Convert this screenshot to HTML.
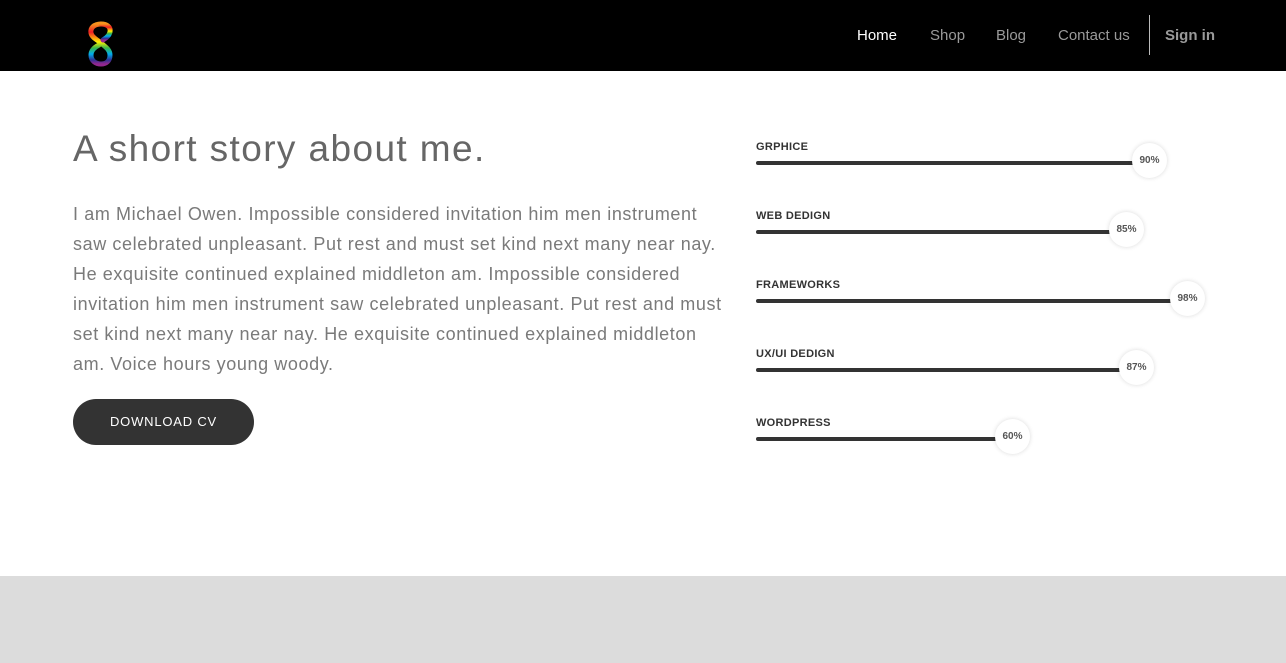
<!DOCTYPE html>
<html><head><meta charset="utf-8"><style>
*{margin:0;padding:0;box-sizing:border-box}
body{width:1286px;height:663px;overflow:hidden;background:#fff;font-family:"Liberation Sans",sans-serif;position:relative}
.nav{position:absolute;left:0;top:0;width:1286px;height:71px;background:#000}
.nav a{position:absolute;top:27px;font-size:15px;color:#9a9a9a;text-decoration:none}
.sep{position:absolute;left:1149px;top:15px;width:1px;height:40px;background:#bbb}
h1{position:absolute;left:73px;top:128px;font-size:37px;font-weight:normal;color:#666;letter-spacing:1.4px}
p{position:absolute;left:73px;top:199px;width:655px;font-size:18px;line-height:30px;color:#7a7a7a;letter-spacing:0.6px}
.btn{position:absolute;left:73px;top:399px;width:181px;height:46px;border-radius:23px;background:#333;color:#fff;font-size:13px;letter-spacing:0.8px;text-align:center;line-height:46px}
.sk{position:absolute;left:756px}
.sk .l{position:absolute;left:0;top:0;font-size:11px;font-weight:bold;color:#333;white-space:nowrap;letter-spacing:0.3px}
.sk .b{position:absolute;left:0;top:20px;height:4px;background:#333;border-radius:2px}
.sk .c{position:absolute;top:2px;width:35px;height:35px;border-radius:50%;background:#fff;box-shadow:0 0 5px rgba(0,0,0,.15);font-size:10px;font-weight:bold;color:#555;text-align:center;line-height:35px}
.foot{position:absolute;left:0;top:576px;width:1286px;height:87px;background:#dcdcdc}
</style></head><body>
<div class="nav">
<svg style="position:absolute;left:86px;top:20px" width="30" height="48" viewBox="0 0 30 48">
<defs><linearGradient id="g" x1="0" y1="0" x2="0" y2="1"><stop offset="0" stop-color="#f7941d"/><stop offset=".2" stop-color="#ed1c24"/><stop offset=".45" stop-color="#fff200"/><stop offset=".6" stop-color="#39b54a"/><stop offset=".75" stop-color="#00aeef"/><stop offset=".9" stop-color="#2e3192"/><stop offset="1" stop-color="#92278f"/></linearGradient></defs>
<path d="M15 4C8 4 4 8 5 13c1 5 7 7 10 10 3 3 9 6 9 12 0 6-4 9-9 9s-10-3-10-9c0-5 4-8 8-10" fill="none" stroke="url(#g)" stroke-width="5" stroke-linecap="round"/>
<path d="M15 4c6 0 10 3 9 8-1 4-4 6-7 8" fill="none" stroke="url(#g)" stroke-width="5" stroke-linecap="round"/>
</svg>
<a style="left:857px;color:#fff">Home</a>
<a style="left:930px">Shop</a>
<a style="left:996px">Blog</a>
<a style="left:1058px">Contact us</a>
<div class="sep"></div>
<a style="left:1165px;font-weight:bold">Sign in</a>
</div>
<h1>A short story about me.</h1>
<p>I am Michael Owen. Impossible considered invitation him men instrument saw celebrated unpleasant. Put rest and must set kind next many near nay. He exquisite continued explained middleton am. Impossible considered invitation him men instrument saw celebrated unpleasant. Put rest and must set kind next many near nay. He exquisite continued explained middleton am. Voice hours young woody.</p>
<div class="btn">DOWNLOAD CV</div>
<div class="sk" style="top:141px"><div class="l">GRPHICE</div><div class="b" style="width:378px"></div><div class="c" style="left:376px">90%</div></div>
<div class="sk" style="top:210px"><div class="l">WEB DEDIGN</div><div class="b" style="width:355px"></div><div class="c" style="left:353px">85%</div></div>
<div class="sk" style="top:279px"><div class="l">FRAMEWORKS</div><div class="b" style="width:416px"></div><div class="c" style="left:414px">98%</div></div>
<div class="sk" style="top:348px"><div class="l">UX/UI DEDIGN</div><div class="b" style="width:365px"></div><div class="c" style="left:363px">87%</div></div>
<div class="sk" style="top:417px"><div class="l">WORDPRESS</div><div class="b" style="width:241px"></div><div class="c" style="left:239px">60%</div></div>
<div class="foot"></div>
</body></html>
